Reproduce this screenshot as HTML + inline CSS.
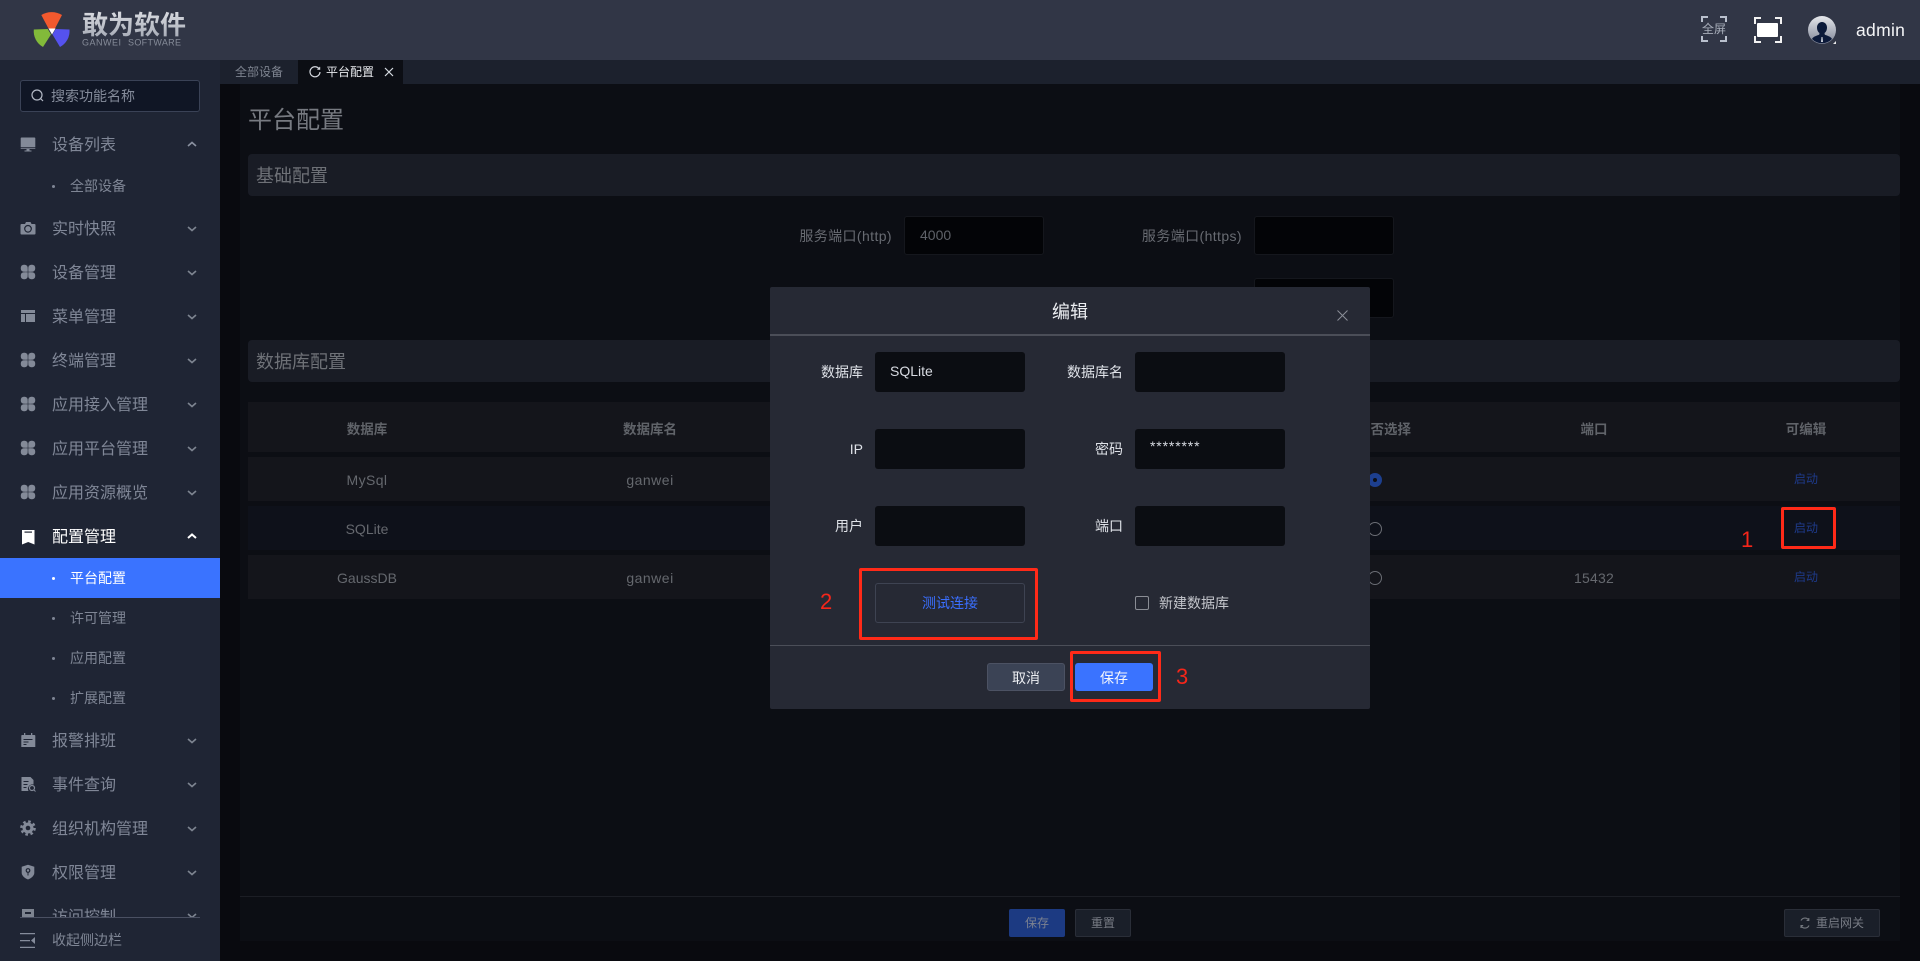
<!DOCTYPE html>
<html lang="zh-CN">
<head>
<meta charset="utf-8">
<title>平台配置</title>
<style>
*{box-sizing:border-box;margin:0;padding:0}
html,body{width:1920px;height:961px;overflow:hidden;background:#090a0f}
body{position:relative;font-family:"Liberation Sans","Noto Sans CJK SC",sans-serif;font-size:14px}
div{position:absolute;white-space:nowrap}
svg{position:absolute;display:block}
.m{left:52px;height:24px;line-height:24px;font-size:16px;color:#808797}
.s{left:70px;height:20px;line-height:20px;font-size:14px;color:#7f8695}
.b{left:52px;width:3px;height:3px;border-radius:50%;background:#7f8695}
.ic{left:20px;width:16px;height:16px}
.ch{left:187px;width:10px;height:6px}
.inp{background:#0b0d12;border-radius:3px;width:150px;height:40px;color:#d8dbe2;line-height:38px;padding-left:15px}
.ml{height:20px;line-height:20px;color:#dfe2e8;text-align:right;font-size:14px}
.fl{height:20px;line-height:20px;color:#686b72;text-align:right;font-size:14px}
.fi{background:#030407;border:1px solid #15171d;border-radius:3px;width:140px;height:39px;color:#5f6269;line-height:37px;padding-left:15px}
.sec{left:248px;width:1652px;height:42px;background:#191c25;border-radius:4px;color:#6e7177;font-size:18px;line-height:44px;padding-left:8px}
.row{left:248px;width:1652px;background:#14151b}
.th{top:420px;height:20px;line-height:20px;text-align:center;font-size:13.5px;font-weight:700;color:#606369;transform:translateX(-50%)}
.td{height:20px;line-height:20px;text-align:center;font-size:14px;color:#65686e;transform:translateX(-50%)}
.on{left:1806px;font-size:12px;color:#1e3a8a}
.red{border:3px solid #ff2a18;border-radius:2px}
.num{color:#f5261a;font-size:22px;line-height:24px;height:24px}
</style>
</head>
<body>
<!-- page bg -->
<div style="left:240px;top:84px;width:1660px;height:857px;background:#0c0e14"></div>

<!-- header -->
<div style="left:0;top:0;width:1920px;height:60px;background:#313646"></div>
<svg style="left:0;top:0" width="80" height="60" viewBox="0 0 80 60">
<path d="M41.300 15A20 20 0 0 1 62 15L55 28.500H48.500Z" fill="#f2592e"/>
<path d="M33.800 29.500L47.700 29L51 34.500L43 47A18 18 0 0 1 33.800 29.500Z" fill="#82ba3a"/>
<path d="M69.500 29.500L55.700 29L52.500 34.500L60 47A18 18 0 0 0 69.500 29.500Z" fill="#5552ee"/>
<path d="M48.500 28.500h7l-3.500 6z" fill="#fff"/>
</svg>
<div style="left:82px;top:8px;height:34px;line-height:34px;font-size:26px;font-weight:700;color:#c6c9d1;background:linear-gradient(#dfe1e6,#9fa4b0);-webkit-background-clip:text;background-clip:text;-webkit-text-fill-color:transparent">敢为软件</div>
<svg style="left:80px;top:36px" width="110" height="12"><text x="2" y="9.500" font-family="Liberation Sans" font-size="9" fill="#868c99" textLength="39" lengthAdjust="spacing">GANWEI</text><text x="48" y="9.500" font-family="Liberation Sans" font-size="9" fill="#868c99" textLength="53" lengthAdjust="spacing">SOFTWARE</text></svg>

<svg style="left:1700px;top:15px" width="28" height="28" fill="none" stroke="#b9c0cd" stroke-width="2"><path d="M8 2H2V7M20 2h6V7M8 26H2V21M20 26h6V21"/></svg>
<div style="left:1702px;top:20px;height:18px;line-height:18px;font-size:12px;color:#a7adb9">全屏</div>
<svg style="left:1753px;top:16px" width="30" height="28" fill="none" stroke="#f2f2f2" stroke-width="2"><path d="M8 2H2V8M22 2h6V8M8 26H2V20M22 26h6V20"/><rect x="4" y="7" width="21" height="14" fill="#fff" stroke="none" rx="1"/></svg>
<svg style="left:1808px;top:16px" width="30" height="30" viewBox="0 0 30 30">
<defs><linearGradient id="av" x1="0" y1="0" x2="0" y2="1"><stop offset="0" stop-color="#e6e8ec"/><stop offset="1" stop-color="#7e8496"/></linearGradient></defs>
<circle cx="14" cy="14" r="14" fill="url(#av)"/>
<path d="M14 6c3 0 5 2.500 5 5.500 0 2.500-1 4.500-2.500 5.500l.3 1.800c3 1 6 2 7.200 4.200A14 14 0 0 1 4 23c1.200-2.200 4.200-3.200 7.200-4.200l.3-1.800C10 16 9 14 9 11.500 9 8.500 11 6 14 6z" fill="#0c1a3a"/>
<path d="M13.500 21h1l.5 5h-2z" fill="#cfd3dc"/>
<path d="M25 28l3-3v3z" fill="#e8e8e8"/>
</svg>
<div style="left:1856px;top:18px;height:24px;line-height:24px;font-size:17.5px;letter-spacing:.3px;color:#f4f5f7">admin</div>

<!-- tabs -->
<div style="left:220px;top:60px;width:1700px;height:24px;background:#1c212d"></div>
<div style="left:235px;top:62px;height:20px;line-height:20px;font-size:12px;color:#7e8490">全部设备</div>
<div style="left:298px;top:60px;width:105px;height:24px;background:#0c0e14"></div>
<svg style="left:309px;top:66px" width="12" height="12" fill="none" stroke="#d8dbe2" stroke-width="1.200"><path d="M10.300 3.200A5 5 0 1 0 11 6"/><path d="M8.300 3.300h2.400V.9" stroke-width="1"/></svg>
<div style="left:326px;top:62px;height:20px;line-height:20px;font-size:12px;color:#e8eaee">平台配置</div>
<svg style="left:384px;top:67px" width="10" height="10" stroke="#d8dbe2" stroke-width="1.200"><path d="M1 1l8 8M9 1L1 9"/></svg>

<!-- sidebar -->
<div style="left:0;top:60px;width:220px;height:901px;background:#1f2534"></div>
<div style="left:20px;top:80px;width:180px;height:32px;background:#101625;border:1px solid #3a4256;border-radius:3px"></div>
<svg style="left:31px;top:89px" width="13" height="13" fill="none" stroke="#b4bac6" stroke-width="1.200"><circle cx="6" cy="6" r="5"/><path d="M9.500 9.500l2.500 2.500"/></svg>
<div style="left:51px;top:86px;height:20px;line-height:20px;font-size:14px;color:#858c9b">搜索功能名称</div>

<!-- menu texts -->
<div class="m" style="top:134px">设备列表</div>
<div class="b" style="top:185px"></div><div class="s" style="top:176px">全部设备</div>
<div class="m" style="top:218px">实时快照</div>
<div class="m" style="top:262px">设备管理</div>
<div class="m" style="top:306px">菜单管理</div>
<div class="m" style="top:350px">终端管理</div>
<div class="m" style="top:394px">应用接入管理</div>
<div class="m" style="top:438px">应用平台管理</div>
<div class="m" style="top:482px">应用资源概览</div>
<div class="m" style="top:526px;color:#fff">配置管理</div>
<div style="left:0;top:558px;width:220px;height:40px;background:#3a73ff"></div>
<div class="b" style="top:577px;background:#fff"></div><div class="s" style="top:568px;color:#fff">平台配置</div>
<div class="b" style="top:617px"></div><div class="s" style="top:608px">许可管理</div>
<div class="b" style="top:657px"></div><div class="s" style="top:648px">应用配置</div>
<div class="b" style="top:697px"></div><div class="s" style="top:688px">扩展配置</div>
<div class="m" style="top:730px">报警排班</div>
<div class="m" style="top:774px">事件查询</div>
<div class="m" style="top:818px">组织机构管理</div>
<div class="m" style="top:862px">权限管理</div>
<div style="left:0;top:900px;width:220px;height:17px;overflow:hidden">
<div class="m" style="top:6px">访问控制</div>
<svg style="left:20px;top:8px" width="16" height="16" fill="#7d8490"><path d="M2 1h12v14H2zM5 4v2h6V4z"/></svg>
<svg style="left:187px;top:13px" width="10" height="6" fill="none" stroke="#7d8490" stroke-width="1.600"><path d="M1 1l4 3.500L9 1"/></svg>
</div>
<div style="left:20px;top:917px;width:180px;height:1px;background:#4a5062"></div>
<svg style="left:20px;top:933px" width="16" height="15" fill="#858c9b"><path d="M0 0h15v1.200H0zM0 7h10v1.200H0zM0 13.800h15V15H0zM15 4v7l-4-3.500z"/></svg>
<div style="left:52px;top:930px;height:20px;line-height:20px;font-size:14px;color:#7f8695">收起侧边栏</div>

<!-- chevrons -->
<svg class="ch" style="top:141px" fill="none" stroke="#8a91a0" stroke-width="1.600"><path d="M1 5L5 1.500 9 5"/></svg>
<svg class="ch" style="top:226px" fill="none" stroke="#7d8490" stroke-width="1.600"><path d="M1 1l4 3.500L9 1"/></svg>
<svg class="ch" style="top:270px" fill="none" stroke="#7d8490" stroke-width="1.600"><path d="M1 1l4 3.500L9 1"/></svg>
<svg class="ch" style="top:314px" fill="none" stroke="#7d8490" stroke-width="1.600"><path d="M1 1l4 3.500L9 1"/></svg>
<svg class="ch" style="top:358px" fill="none" stroke="#7d8490" stroke-width="1.600"><path d="M1 1l4 3.500L9 1"/></svg>
<svg class="ch" style="top:402px" fill="none" stroke="#7d8490" stroke-width="1.600"><path d="M1 1l4 3.500L9 1"/></svg>
<svg class="ch" style="top:446px" fill="none" stroke="#7d8490" stroke-width="1.600"><path d="M1 1l4 3.500L9 1"/></svg>
<svg class="ch" style="top:490px" fill="none" stroke="#7d8490" stroke-width="1.600"><path d="M1 1l4 3.500L9 1"/></svg>
<svg class="ch" style="top:533px" fill="none" stroke="#fff" stroke-width="2"><path d="M1 5L5 1.500 9 5"/></svg>
<svg class="ch" style="top:738px" fill="none" stroke="#7d8490" stroke-width="1.600"><path d="M1 1l4 3.500L9 1"/></svg>
<svg class="ch" style="top:782px" fill="none" stroke="#7d8490" stroke-width="1.600"><path d="M1 1l4 3.500L9 1"/></svg>
<svg class="ch" style="top:826px" fill="none" stroke="#7d8490" stroke-width="1.600"><path d="M1 1l4 3.500L9 1"/></svg>
<svg class="ch" style="top:870px" fill="none" stroke="#7d8490" stroke-width="1.600"><path d="M1 1l4 3.500L9 1"/></svg>

<!-- icons -->
<svg class="ic" style="top:136px" viewBox="0 0 16 16" fill="#838a98"><path d="M1.500 1.500h13a.8.8 0 0 1 .8.8v8.700H.7V2.300a.8.8 0 0 1 .8-.8z"/><path d="M.7 11.800h14.600v1H.7zM6.500 13h3v1.500h2v1h-7v-1h2z"/></svg>
<svg class="ic" style="top:220px" viewBox="0 0 16 16"><path d="M1.500 4H5l1-2h4.500l1 2h3a1 1 0 0 1 1 1v8.500a1 1 0 0 1-1 1h-13a1 1 0 0 1-1-1V5a1 1 0 0 1 1-1z" fill="#838a98"/><circle cx="8" cy="8.800" r="3.300" fill="none" stroke="#1f2534" stroke-width="1.200"/></svg>
<svg class="ic" style="top:264px" viewBox="0 0 16 16" fill="#838a98"><rect x=".8" y=".8" width="6.900" height="6.900" rx="3"/><rect x="8.300" y=".8" width="6.900" height="6.900" rx="3"/><rect x=".8" y="8.300" width="6.900" height="6.900" rx="3"/><rect x="8.300" y="8.300" width="6.900" height="6.900" rx="3"/><path d="M5 5h2.700v2.700H5zM8.300 5H11v2.700H8.300zM5 8.300h2.700V11H5zM8.300 8.300H11V11H8.300z"/></svg>
<svg class="ic" style="top:308px" viewBox="0 0 16 16" fill="#838a98"><path d="M1 2h14v3H1zM1 6h4v8H1zM6 6h9v8H6z"/></svg>
<svg class="ic" style="top:352px" viewBox="0 0 16 16" fill="#838a98"><rect x=".8" y=".8" width="6.900" height="6.900" rx="3"/><rect x="8.300" y=".8" width="6.900" height="6.900" rx="3"/><rect x=".8" y="8.300" width="6.900" height="6.900" rx="3"/><rect x="8.300" y="8.300" width="6.900" height="6.900" rx="3"/><path d="M5 5h2.700v2.700H5zM8.300 5H11v2.700H8.300zM5 8.300h2.700V11H5zM8.300 8.300H11V11H8.300z"/></svg>
<svg class="ic" style="top:396px" viewBox="0 0 16 16" fill="#838a98"><rect x=".8" y=".8" width="6.900" height="6.900" rx="3"/><rect x="8.300" y=".8" width="6.900" height="6.900" rx="3"/><rect x=".8" y="8.300" width="6.900" height="6.900" rx="3"/><rect x="8.300" y="8.300" width="6.900" height="6.900" rx="3"/><path d="M5 5h2.700v2.700H5zM8.300 5H11v2.700H8.300zM5 8.300h2.700V11H5zM8.300 8.300H11V11H8.300z"/></svg>
<svg class="ic" style="top:440px" viewBox="0 0 16 16" fill="#838a98"><rect x=".8" y=".8" width="6.900" height="6.900" rx="3"/><rect x="8.300" y=".8" width="6.900" height="6.900" rx="3"/><rect x=".8" y="8.300" width="6.900" height="6.900" rx="3"/><rect x="8.300" y="8.300" width="6.900" height="6.900" rx="3"/><path d="M5 5h2.700v2.700H5zM8.300 5H11v2.700H8.300zM5 8.300h2.700V11H5zM8.300 8.300H11V11H8.300z"/></svg>
<svg class="ic" style="top:484px" viewBox="0 0 16 16" fill="#838a98"><rect x=".8" y=".8" width="6.900" height="6.900" rx="3"/><rect x="8.300" y=".8" width="6.900" height="6.900" rx="3"/><rect x=".8" y="8.300" width="6.900" height="6.900" rx="3"/><rect x="8.300" y="8.300" width="6.900" height="6.900" rx="3"/><path d="M5 5h2.700v2.700H5zM8.300 5H11v2.700H8.300zM5 8.300h2.700V11H5zM8.300 8.300H11V11H8.300z"/></svg>
<svg class="ic" style="top:529px" viewBox="0 0 16 16"><path d="M2 1h12.500v14.500L8.200 13 2 15.500z" fill="#fff"/><path d="M4.500 2.500h7.500v1.200H4.500z" fill="#1f2534"/></svg>
<svg class="ic" style="top:732px" viewBox="0 0 16 16"><path d="M2 3h12.500a.8.8 0 0 1 .8.800V15H1.300V3.800A.8.8 0 0 1 2 3z" fill="#838a98"/><path d="M4 1h1.300v3H4zM11 1h1.300v3H11z" fill="#838a98"/><path d="M3.500 7h9v1h-9zM3.500 9.500h5v1h-5zM3.500 12h3v1h-3z" fill="#1f2534"/></svg>
<svg class="ic" style="top:776px" viewBox="0 0 16 16"><path d="M1.500 1h9l3 3v4.500a4.500 4.500 0 0 0-5 6.500h-7z" fill="#838a98"/><path d="M3.500 5h5v1h-5zM3.500 8h4v1h-4zM3.500 11h3v1h-3z" fill="#1f2534"/><circle cx="12" cy="12" r="2.500" fill="none" stroke="#838a98" stroke-width="1.200"/><path d="M14 14l1.500 1.500" stroke="#838a98"/></svg>
<svg class="ic" style="top:820px" viewBox="0 0 16 16"><circle cx="8" cy="8" r="5.500" fill="#838a98"/><circle cx="8" cy="8" r="6.600" fill="none" stroke="#838a98" stroke-width="2.400" stroke-dasharray="2.600 2.580"/><circle cx="8" cy="8" r="2.300" fill="#1f2534"/></svg>
<svg class="ic" style="top:864px" viewBox="0 0 16 16"><path d="M8 .8l6.300 2v6c0 3.300-3.500 5.700-6.300 6.700-2.800-1-6.300-3.400-6.300-6.700v-6z" fill="#838a98"/><circle cx="8" cy="6.500" r="1.800" fill="none" stroke="#1f2534" stroke-width="1.200"/><path d="M7.500 8h1v3.500h-1z" fill="#1f2534"/></svg>

<!-- page content -->
<div style="left:248px;top:105px;height:32px;line-height:32px;font-size:24px;color:#777a81">平台配置</div>
<div class="sec" style="top:154px">基础配置</div>
<div class="sec" style="top:340px">数据库配置</div>

<div class="fl" style="left:780px;width:112px;top:226px;letter-spacing:.4px">服务端口(http)</div>
<div class="fi" style="left:904px;top:216px">4000</div>
<div class="fl" style="left:1130px;width:112px;top:226px;letter-spacing:.4px">服务端口(https)</div>
<div class="fi" style="left:1254px;top:216px"></div>
<div class="fi" style="left:1254px;top:278px;height:40px"></div>

<!-- table -->
<div class="row" style="top:402px;height:50px"></div>
<div class="row" style="top:457px;height:44px"></div>
<div class="row" style="top:506px;height:44px;background:#0e111a"></div>
<div class="row" style="top:555px;height:44px"></div>
<div class="th" style="left:367px">数据库</div>
<div class="th" style="left:650px">数据库名</div>
<div class="th" style="left:1384px">是否选择</div>
<div class="th" style="left:1594px">端口</div>
<div class="th" style="left:1806px">可编辑</div>
<div class="td" style="left:367px;top:470px;letter-spacing:.4px">MySql</div>
<div class="td" style="left:650px;top:470px;letter-spacing:.5px">ganwei</div>
<div class="td" style="left:367px;top:519px">SQLite</div>
<div class="td" style="left:367px;top:568px">GaussDB</div>
<div class="td" style="left:650px;top:568px;letter-spacing:.5px">ganwei</div>
<div class="td" style="left:1594px;top:568px;letter-spacing:.2px">15432</div>
<div class="td on" style="top:469px">启动</div>
<div class="td on" style="top:518px">启动</div>
<div class="td on" style="top:567px">启动</div>
<div style="left:1368px;top:473px;width:14px;height:14px;border-radius:50%;background:#1d3f8f"></div>
<div style="left:1373px;top:478px;width:4px;height:4px;border-radius:50%;background:#0d0f15"></div>
<div style="left:1368px;top:522px;width:14px;height:14px;border-radius:50%;border:1px solid #6a6d74"></div>
<div style="left:1368px;top:571px;width:14px;height:14px;border-radius:50%;border:1px solid #6a6d74"></div>

<!-- footer -->
<div style="left:240px;top:896px;width:1660px;height:1px;background:#1c1e25"></div>
<div style="left:1009px;top:909px;width:56px;height:28px;background:#1c3a82;border-radius:2px;color:#7b8190;font-size:12px;line-height:28px;text-align:center">保存</div>
<div style="left:1075px;top:909px;width:56px;height:28px;background:#1a1f29;border:1px solid #2a2e38;border-radius:2px;color:#777b84;font-size:12px;line-height:26px;text-align:center">重置</div>
<div style="left:1784px;top:909px;width:96px;height:28px;background:#1a1f29;border:1px solid #2a2e38;border-radius:2px"></div>
<svg style="left:1799px;top:917px" width="12" height="12" fill="none" stroke="#74787f" stroke-width="1.100"><path d="M9.800 3.200A4.500 4.500 0 0 0 2 3.500M2 8.800A4.500 4.500 0 0 0 10 8.500"/><path d="M9.800 1v2.400H7.600M2 11V8.600h2.200"/></svg>
<div style="left:1816px;top:913px;height:20px;line-height:20px;font-size:12px;color:#777b84">重启网关</div>

<!-- modal -->
<div style="left:770px;top:287px;width:600px;height:422px;background:#262934;border-radius:2px"></div>
<div style="left:770px;top:296px;width:600px;height:32px;line-height:32px;text-align:center;font-size:18px;color:#eceef2">编辑</div>
<svg style="left:1337px;top:310px" width="11" height="11" stroke="#8b8f98" stroke-width="1"><path d="M.5.500l10 10M10.500.500l-10 10"/></svg>
<div style="left:770px;top:334px;width:600px;height:2px;background:#4b4e58"></div>

<div class="ml" style="left:793px;width:70px;top:362px">数据库</div>
<div class="inp" style="left:875px;top:352px">SQLite</div>
<div class="ml" style="left:1043px;width:80px;top:362px">数据库名</div>
<div class="inp" style="left:1135px;top:352px"></div>
<div class="ml" style="left:793px;width:70px;top:439px">IP</div>
<div class="inp" style="left:875px;top:429px"></div>
<div class="ml" style="left:1043px;width:80px;top:439px">密码</div>
<div class="inp" style="left:1135px;top:429px;line-height:34px;letter-spacing:.85px">********</div>
<div class="ml" style="left:793px;width:70px;top:516px">用户</div>
<div class="inp" style="left:875px;top:506px"></div>
<div class="ml" style="left:1043px;width:80px;top:516px">端口</div>
<div class="inp" style="left:1135px;top:506px"></div>

<div style="left:875px;top:583px;width:150px;height:40px;border:1px solid #3e4352;border-radius:3px;color:#3a6fff;text-align:center;line-height:38px;font-size:14px">测试连接</div>
<div style="left:1135px;top:596px;width:14px;height:14px;border:1px solid #8a8d95;border-radius:2px"></div>
<div style="left:1159px;top:593px;height:20px;line-height:20px;color:#c4c6cc;font-size:14px">新建数据库</div>

<div style="left:770px;top:645px;width:600px;height:1px;background:#4b4e58"></div>
<div style="left:987px;top:663px;width:78px;height:28px;background:#3b4355;border:1px solid #4c5263;border-radius:3px;color:#eceef2;text-align:center;line-height:28px;font-size:14px">取消</div>
<div style="left:1075px;top:663px;width:78px;height:28px;background:#3a73ff;border-radius:3px;color:#f4f6fb;text-align:center;line-height:30px;font-size:14px">保存</div>

<!-- annotations -->
<div class="red" style="left:1781px;top:507px;width:55px;height:42px"></div>
<div class="num" style="left:1741px;top:528px">1</div>
<div class="red" style="left:859px;top:568px;width:179px;height:72px"></div>
<div class="num" style="left:820px;top:590px">2</div>
<div class="red" style="left:1070px;top:651px;width:91px;height:51px"></div>
<div class="num" style="left:1176px;top:665px">3</div>
</body>
</html>
